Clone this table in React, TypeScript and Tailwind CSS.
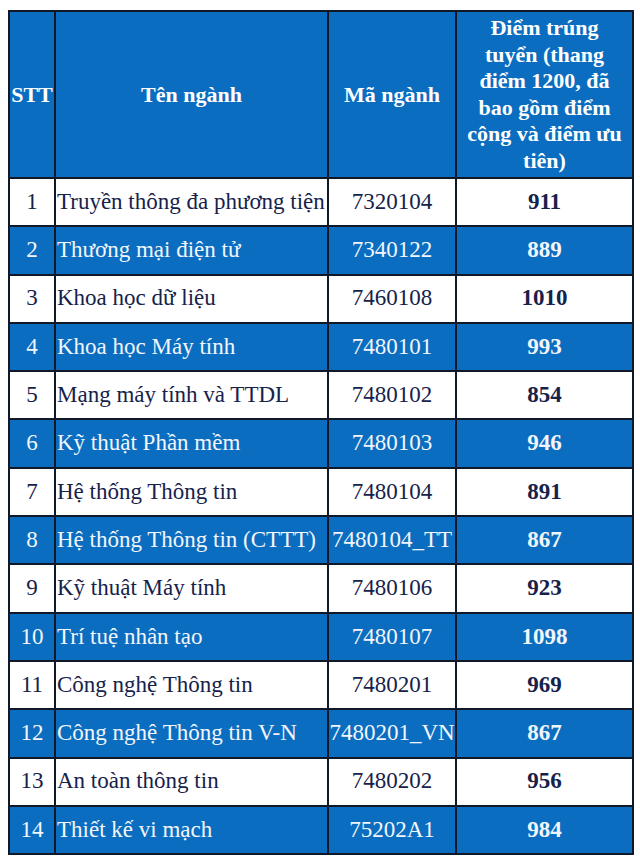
import React from "react";

// Bảng điểm trúng tuyển theo ngành
const rows: [string, string, string, string][] = [
  ["1", "Truyền thông đa phương tiện", "7320104", "911"],
  ["2", "Thương mại điện tử", "7340122", "889"],
  ["3", "Khoa học dữ liệu", "7460108", "1010"],
  ["4", "Khoa học Máy tính", "7480101", "993"],
  ["5", "Mạng máy tính và TTDL", "7480102", "854"],
  ["6", "Kỹ thuật Phần mềm", "7480103", "946"],
  ["7", "Hệ thống Thông tin", "7480104", "891"],
  ["8", "Hệ thống Thông tin (CTTT)", "7480104_TT", "867"],
  ["9", "Kỹ thuật Máy tính", "7480106", "923"],
  ["10", "Trí tuệ nhân tạo", "7480107", "1098"],
  ["11", "Công nghệ Thông tin", "7480201", "969"],
  ["12", "Công nghệ Thông tin V-N", "7480201_VN", "867"],
  ["13", "An toàn thông tin", "7480202", "956"],
  ["14", "Thiết kế vi mạch", "75202A1", "984"],
];

const headerLines = [
  "Điểm trúng",
  "tuyển (thang",
  "điểm 1200, đã",
  "bao gồm điểm",
  "cộng và điểm ưu",
  "tiên)",
];

const App: React.FC = () => {
  return (
    <div
      className="w-[640px] h-[865px] bg-white pt-[10px] pl-[8px]"
      style={{ fontFamily: '"Liberation Serif", "Times New Roman", serif' }}
    >
      <table className="border-collapse border-2 border-[#111827] w-[624px] table-fixed">
        <colgroup>
          <col className="w-[46px]" />
          <col className="w-[273px]" />
          <col className="w-[128px]" />
          <col className="w-[177px]" />
        </colgroup>
        <thead>
          <tr className="bg-[#0b6dbf] text-white font-bold text-[22px]">
            <th className="h-[167px] border-2 border-[#111827] p-0 text-center">STT</th>
            <th className="border-2 border-[#111827] p-0 text-center">Tên ngành</th>
            <th className="border-2 border-[#111827] p-0 text-center">Mã ngành</th>
            <th className="border-2 border-[#111827] p-0 text-center leading-[26.5px] whitespace-nowrap">
              {headerLines.map((l) => (
                <div key={l}>{l}</div>
              ))}
            </th>
          </tr>
        </thead>
        <tbody>
          {rows.map(([stt, name, code, score], i) => {
            const blue = i % 2 === 1;
            return (
              <tr
                key={stt}
                className={`text-[23px] ${blue ? "bg-[#0b6dbf] text-[#f2f6fc]" : "bg-white text-[#16224a]"}`}
              >
                <td className="h-[48.3px] border-2 border-[#111827] p-0 text-center">{stt}</td>
                <td className="border-2 border-[#111827] p-0 pl-[1px] whitespace-nowrap overflow-hidden">{name}</td>
                <td className="border-2 border-[#111827] p-0 text-center whitespace-nowrap">{code}</td>
                <td className="border-2 border-[#111827] p-0 text-center font-bold">{score}</td>
              </tr>
            );
          })}
        </tbody>
      </table>
    </div>
  );
};

export default App;
